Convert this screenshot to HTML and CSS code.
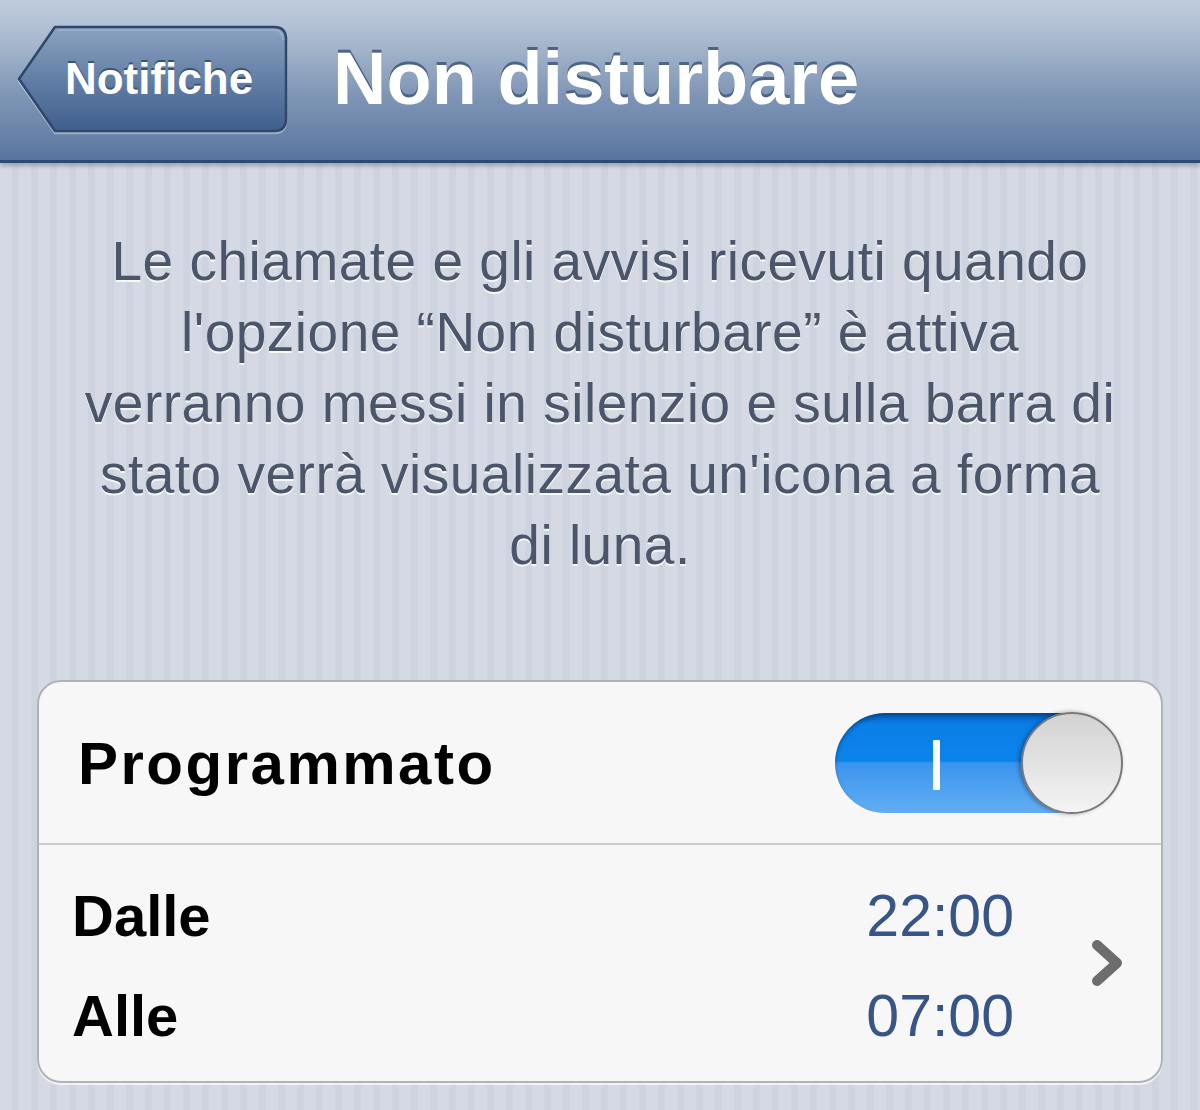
FILE: index.html
```html
<!DOCTYPE html>
<html lang="it">
  <head>
    <meta charset="UTF-8" />
    <meta name="viewport" content="width=device-width, initial-scale=1.0" />
    <title>Non disturbare</title>
    <link rel="stylesheet" href="styles.css">
  </head>
  <body>
    <header class="navbar">
      <a class="back-button" href="#">
        <svg class="back-shape" viewBox="0 0 272 110" width="272" height="110" aria-hidden="true">
          <defs>
            <linearGradient id="backFill" x1="0" y1="0" x2="0" y2="1">
              <stop offset="0" stop-color="#8ca2c1" />
              <stop offset="0.5" stop-color="#637fa6" />
              <stop offset="1" stop-color="#3f5f8d" />
            </linearGradient>
          </defs>
          <path d="M2 55 L38 3 H257 Q269 3 269 15 V95 Q269 107 257 107 H38 Z" fill="url(#backFill)" stroke="#2f476b" stroke-width="2.5" stroke-linejoin="round" />
          <path d="M41 6 H256 Q266 6 266 16" fill="none" stroke="rgba(255,255,255,0.18)" stroke-width="1.5" />
        </svg>
        <span class="back-label">Notifiche</span>
      </a>
      <h1 class="nav-title">Non disturbare</h1>
    </header>

    <p class="description">Le chiamate e gli avvisi ricevuti quando<br>l'opzione “Non disturbare” è attiva<br>verranno messi in silenzio e sulla barra di<br>stato verrà visualizzata un'icona a forma<br>di luna.</p>

    <section class="group">
      <div class="row row-switch">
        <span class="row-label">Programmato</span>
        <span class="switch">
          <span class="switch-on"></span>
          <span class="switch-knob"></span>
        </span>
      </div>
      <a class="row row-times" href="#">
        <span class="times">
          <span class="time-line"><span class="time-label">Dalle</span><span class="time-value">22:00</span></span>
          <span class="time-line"><span class="time-label">Alle</span><span class="time-value">07:00</span></span>
        </span>
        <svg class="chevron" viewBox="0 0 34 48" width="34" height="48" aria-hidden="true">
          <path d="M7 6 L27 24 L7 42" fill="none" stroke="#6d6d6d" stroke-width="10" stroke-linecap="round" stroke-linejoin="round" />
        </svg>
      </a>
    </section>
  </body>
</html>
```

FILE: styles.css
```css
body {
  margin: 0;
  min-height: 1110px;
  font-family: 'Liberation Sans', Arial, sans-serif;
  background-color: #d1d7e1;
  background-image: repeating-linear-gradient(90deg, #d4d9e3 0, #d4d9e3 12px, #ced4df 12px, #ced4df 19px);
  overflow: hidden;
}

.navbar {
  height: 160px;
  display: flex;
  align-items: center;
  gap: 44px;
  padding-left: 17px;
  background: linear-gradient(#bfccdc 0%, #a9b9ce 25%, #7e95b5 60%, #5a769f 100%);
  border-bottom: 3px solid #2e4a70;
  box-shadow: 0 3px 4px rgba(40, 50, 70, 0.3);
}

.back-button {
  position: relative;
  width: 272px;
  height: 110px;
  display: flex;
  align-items: center;
  justify-content: center;
  text-decoration: none;
  margin-top: -2px;
}

.back-shape {
  position: absolute;
  left: 0;
  top: 0;
  filter: drop-shadow(0 2px 0 rgba(255, 255, 255, 0.35));
}

.back-label {
  position: relative;
  padding-left: 12px;
  font-size: 44px;
  font-weight: 700;
  color: #fff;
  text-shadow: 0 -2px 0 #3a5274;
}

.nav-title {
  margin: 0;
  font-size: 74px;
  font-weight: 700;
  color: #fff;
  text-shadow: 0 -3px 0 #4d6487;
  margin-top: -4px;
}

.description {
  margin: 63px 0 0;
  text-align: center;
  font-size: 55px;
  line-height: 71px;
  letter-spacing: 0.5px;
  color: #4c566b;
  text-shadow: 0 2px 0 rgba(255, 255, 255, 0.8);
}

.group {
  margin: 99px 37px 0;
  background: #f7f7f7;
  border: 2px solid #aeb2b9;
  border-radius: 24px;
  box-shadow: 0 2px 0 rgba(255, 255, 255, 0.7);
  overflow: hidden;
}

.row {
  display: flex;
  align-items: center;
  color: #000;
  text-decoration: none;
}

.row-switch {
  height: 161px;
  padding: 0 39px 0 39px;
  justify-content: space-between;
  border-bottom: 2px solid #cbcbcb;
}

.row-label {
  font-size: 60px;
  font-weight: 700;
  letter-spacing: 2.5px;
  margin-top: 2px;
}

.switch {
  position: relative;
  width: 287px;
  height: 100px;
  border-radius: 50px;
  background: linear-gradient(#0660c8 0%, #0a7fe6 12%, #0a84ec 48%, #3b95ee 50%, #62aef2 100%);
  box-shadow: inset 0 3px 4px rgba(0, 0, 0, 0.3), 0 1px 0 rgba(255, 255, 255, 0.8);
  display: flex;
  align-items: center;
}

.switch-on {
  width: 7px;
  height: 50px;
  margin-left: 98px;
  margin-top: 4px;
  background: #fff;
  border-radius: 1px;
}

.switch-knob {
  position: absolute;
  right: -1px;
  top: -1px;
  width: 98px;
  height: 98px;
  border-radius: 50%;
  border: 2px solid #7a7a7a;
  background: linear-gradient(#d2d2d2, #f3f3f3);
  box-shadow: -2px 0 4px rgba(0, 0, 0, 0.35);
}

.row-times {
  height: 236px;
  padding: 0 37px 0 33px;
  justify-content: space-between;
}

.times {
  flex: 1;
  display: flex;
  flex-direction: column;
  gap: 32px;
  padding-right: 76px;
  margin-top: 6px;
}

.time-line {
  display: flex;
  justify-content: space-between;
  align-items: baseline;
  line-height: 68px;
}

.time-label {
  font-size: 58px;
  font-weight: 700;
  color: #000;
}

.time-value {
  font-size: 59px;
  color: #385588;
}

.chevron {
  display: block;
}
```
